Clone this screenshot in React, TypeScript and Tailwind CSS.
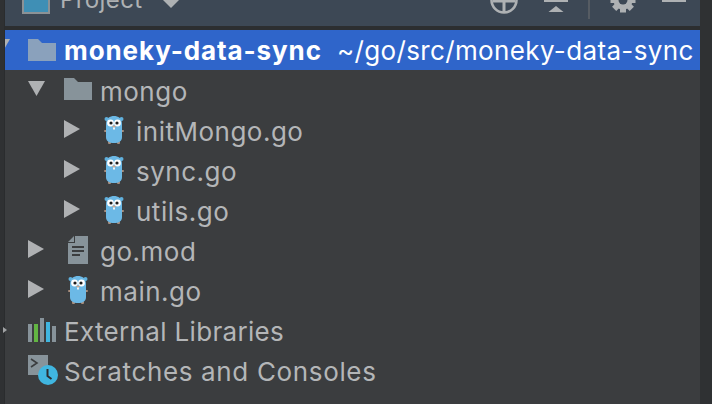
const textFont = "font-['Inter','Noto_Sans',sans-serif]";
const rowBase = 'pt-[2px] text-[26px] text-[#b4b6b8]';
const rowText = `${rowBase} tracking-[0.5px]`;

function ClosedArrow() {
  return (
    <svg width="16" height="18" viewBox="0 0 16 18" className="mb-[3px] shrink-0">
      <path d="M0 0l16 9-16 9z" fill="#afb1b3" />
    </svg>
  );
}

function OpenArrow() {
  return (
    <svg width="17" height="15" viewBox="0 0 17 15" className="mb-[3px] shrink-0">
      <path d="M0 0h17l-8.5 15z" fill="#afb1b3" />
    </svg>
  );
}

function Folder({ color }: { color: string }) {
  return (
    <svg width="28" height="22" viewBox="0 0 28 22" className="mb-[3px] shrink-0">
      <path d="M0 0h10l4 4h14v18H0z" fill={color} />
    </svg>
  );
}

function Gopher() {
  return (
    <svg width="20" height="30" viewBox="0 0 20 30" className="shrink-0">
      <circle cx="2.5" cy="4" r="2" fill="#5fb0dd" />
      <circle cx="17.5" cy="4" r="2" fill="#5fb0dd" />
      <rect x="0" y="15" width="3" height="2" rx="1" fill="#a98e7d" />
      <rect x="17" y="15" width="3" height="2" rx="1" fill="#a98e7d" />
      <rect x="4" y="26" width="3" height="3" rx="1" fill="#a98e7d" />
      <rect x="13" y="26" width="3" height="3" rx="1" fill="#a98e7d" />
      <path d="M2 9C2 3 6 1 10 1s8 2 8 8v13c0 4-3 6-8 6s-8-2-8-6z" fill="#6cb9e6" />
      <circle cx="6.5" cy="8" r="3.4" fill="#fff" />
      <circle cx="13.5" cy="8" r="3.4" fill="#fff" />
      <circle cx="7" cy="8" r="1.6" fill="#1c1c1c" />
      <circle cx="13" cy="8" r="1.6" fill="#1c1c1c" />
      <ellipse cx="10" cy="11.5" rx="1.8" ry="1.1" fill="#c9a58d" />
      <rect x="9" y="12.5" width="2" height="2" fill="#f4f4f4" />
    </svg>
  );
}

function FileRow({ name, indent }: { name: string; indent: string }) {
  return (
    <div className={`flex h-10 items-center ${indent}`}>
      <ClosedArrow />
      <div className="ml-[24px] flex w-[32px] shrink-0 items-center">
        <Gopher />
      </div>
      <span className={rowText}>{name}</span>
    </div>
  );
}

function Gear() {
  const angles = [0, 45, 90, 135];
  return (
    <svg width="26" height="26" viewBox="0 0 26 26" className="mb-[13px] ml-[20px] shrink-0">
      <circle cx="13" cy="13" r="9.5" fill="#aeb1b3" />
      {angles.map((a) => (
        <rect key={a} x="10" y="0.5" width="6" height="25" fill="#aeb1b3" transform={`rotate(${a} 13 13)`} />
      ))}
      <circle cx="13" cy="13" r="4.5" fill="#3d4855" />
    </svg>
  );
}

export default function App() {
  return (
    <div className={`relative flex h-[404px] w-[712px] overflow-hidden bg-[#2f3133] ${textFont}`}>
      <div className="absolute left-[3px] top-[327px] h-0 w-0 border-y-[3px] border-l-[4px] border-y-transparent border-l-[#a0a2a4]" />
      <div className="ml-[4px] flex w-[696px] flex-col border-l border-[#2a2c2e] bg-[#3b3d3f]">
        <div className="flex h-[26px] shrink-0 items-end overflow-hidden bg-[#3d4855]">
          <div className="mb-[12px] ml-[17px] h-[24px] w-[28px] shrink-0 border-2 border-[#8c9296] bg-[#3f8fb5]" />
          <span className="mb-[11px] ml-[10px] text-[24px] leading-[30px] tracking-[0.4px] text-[#aeb1b3]">Project</span>
          <svg width="16" height="8" viewBox="0 0 16 8" className="mb-[18px] ml-[20px] shrink-0">
            <path d="M0 0h16L8 8z" fill="#aeb1b3" />
          </svg>
          <div className="ml-auto flex items-end">
            <svg width="28" height="28" viewBox="0 0 28 28" className="mb-[12px] shrink-0">
              <circle cx="14" cy="14" r="12.5" fill="none" stroke="#aeb1b3" strokeWidth="2.6" />
              <path d="M3 15h22M14 15v11" stroke="#aeb1b3" strokeWidth="3" />
            </svg>
            <svg width="24" height="14" viewBox="0 0 24 14" className="mb-[12px] ml-[26px] shrink-0">
              <path d="M0 1h24" stroke="#aeb1b3" strokeWidth="2" />
              <path d="M12 6l7.5 6h-15z" fill="#aeb1b3" />
            </svg>
            <div className="mb-[7px] ml-[20px] h-[20px] w-[2px] shrink-0 bg-[#565c63]" />
            <Gear />
            <div className="mb-[24px] ml-[26px] mr-[14px] h-[2px] w-[24px] shrink-0 bg-[#aeb1b3]" />
          </div>
        </div>
        <div className="h-[4px] shrink-0 bg-[#2c2e30]" />
        <div className="flex h-10 shrink-0 items-center overflow-hidden bg-[#2f65ca]">
          <div className="-ml-[12px] mb-[5px] shrink-0">
            <OpenArrow />
          </div>
          <div className="ml-[18px] mt-[2px]">
            <Folder color="#8aa1bc" />
          </div>
          <span className="ml-[8px] whitespace-nowrap text-[26px] font-bold tracking-[0.9px] text-white">moneky-data-sync</span>
          <span className="ml-[15px] whitespace-nowrap text-[26px] tracking-[0.36px] text-white">~/go/src/moneky-data-sync</span>
        </div>
        <div className="flex h-10 items-center pl-[23px]">
          <OpenArrow />
          <div className="ml-[19px]">
            <Folder color="#87939a" />
          </div>
          <span className={`ml-[8px] ${rowText}`}>mongo</span>
        </div>
        <FileRow name="initMongo.go" indent="pl-[59px]" />
        <FileRow name="sync.go" indent="pl-[59px]" />
        <FileRow name="utils.go" indent="pl-[59px]" />
        <div className="flex h-10 items-center pl-[23px]">
          <ClosedArrow />
          <svg width="20" height="28" viewBox="0 0 20 28" className="ml-[24px] mr-[12px] shrink-0">
            <path d="M7 0h13v28H0V7h7zM0 6l6-6v6z" fill="#87939a" />
            <path d="M4 11h12M4 15h12M4 19h8" stroke="#3b3d3f" strokeWidth="2" />
          </svg>
          <span className={rowText}>go.mod</span>
        </div>
        <FileRow name="main.go" indent="pl-[23px]" />
        <div className="flex h-10 items-center pl-[23px]">
          <svg width="28" height="24" viewBox="0 0 28 24" className="shrink-0">
            <rect x="0" y="6" width="4" height="18" fill="#87939a" />
            <rect x="6" y="6" width="4" height="18" fill="#62b543" />
            <rect x="12" y="0" width="4" height="24" fill="#87939a" />
            <rect x="18" y="4" width="4" height="20" fill="#40b6e0" />
            <rect x="24" y="8" width="4" height="16" fill="#87939a" />
          </svg>
          <span className={`ml-[8px] ${rowBase} tracking-[0.33px]`}>External Libraries</span>
        </div>
        <div className="flex h-10 items-center pl-[23px]">
          <svg width="30" height="30" viewBox="0 0 30 30" className="shrink-0">
            <path d="M0 0h20v20H0z" fill="#87939a" />
            <path d="M3 4l6 4-6 4" fill="none" stroke="#3b3d3f" strokeWidth="1.6" />
            <circle cx="20" cy="20" r="10" fill="#40b6e0" />
            <path d="M19.5 14v7l4 3" fill="none" stroke="#2b2d30" strokeWidth="2" />
          </svg>
          <span className={`ml-[6px] ${rowBase} tracking-[0.65px]`}>Scratches and Consoles</span>
        </div>
      </div>
    </div>
  );
}
